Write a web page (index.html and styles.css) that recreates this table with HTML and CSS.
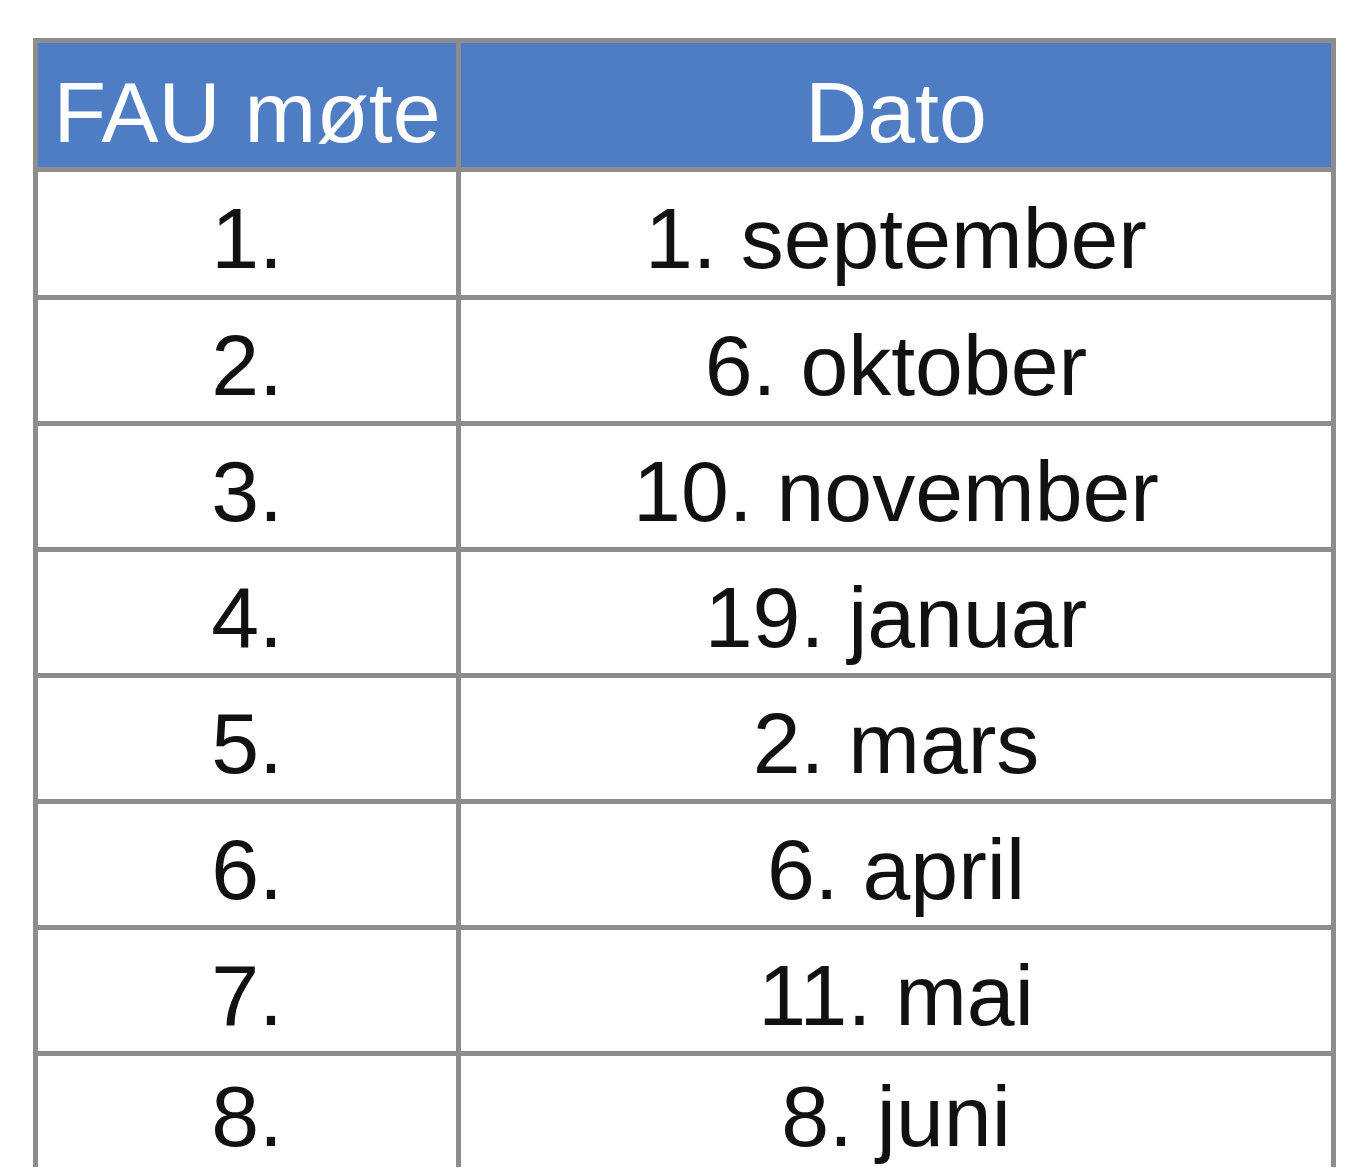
FILE: index.html
```html
<!DOCTYPE html>
<html lang="no">
<head>
<meta charset="utf-8">
<title>FAU møter</title>
<link rel="stylesheet" href="styles.css">
</head>
<body>
<div class="table">
  <div class="cell head">FAU møte</div>
  <div class="cell head">Dato</div>
  <div class="cell">1.</div><div class="cell">1. september</div>
  <div class="cell">2.</div><div class="cell">6. oktober</div>
  <div class="cell">3.</div><div class="cell">10. november</div>
  <div class="cell">4.</div><div class="cell">19. januar</div>
  <div class="cell">5.</div><div class="cell">2. mars</div>
  <div class="cell">6.</div><div class="cell">6. april</div>
  <div class="cell">7.</div><div class="cell">11. mai</div>
  <div class="cell">8.</div><div class="cell">8. juni</div>
</div>
</body>
</html>
```
FILE: styles.css
```css
html, body {
  margin: 0;
  padding: 0;
  background: #ffffff;
}
body {
  font-family: "Liberation Sans", Arial, sans-serif;
  overflow: hidden;
}
.table {
  margin: 38px 0 0 33px;
  width: 1303px;
  box-sizing: border-box;
  display: grid;
  grid-template-columns: 418px 870px;
  grid-template-rows: 124px 123px repeat(6, 121px) 111px;
  gap: 5px;
  padding: 5px 5px 0 5px;
  background: #8d8d8d;
}
.cell {
  background: #ffffff;
  color: #111111;
  font-size: 86px;
  line-height: 96px;
  display: flex;
  align-items: center;
  justify-content: center;
  padding-top: 8px;
  box-sizing: border-box;
  white-space: nowrap;
}
.head {
  background: #4e7dc4;
  color: #ffffff;
  padding-top: 14px;
}
```
